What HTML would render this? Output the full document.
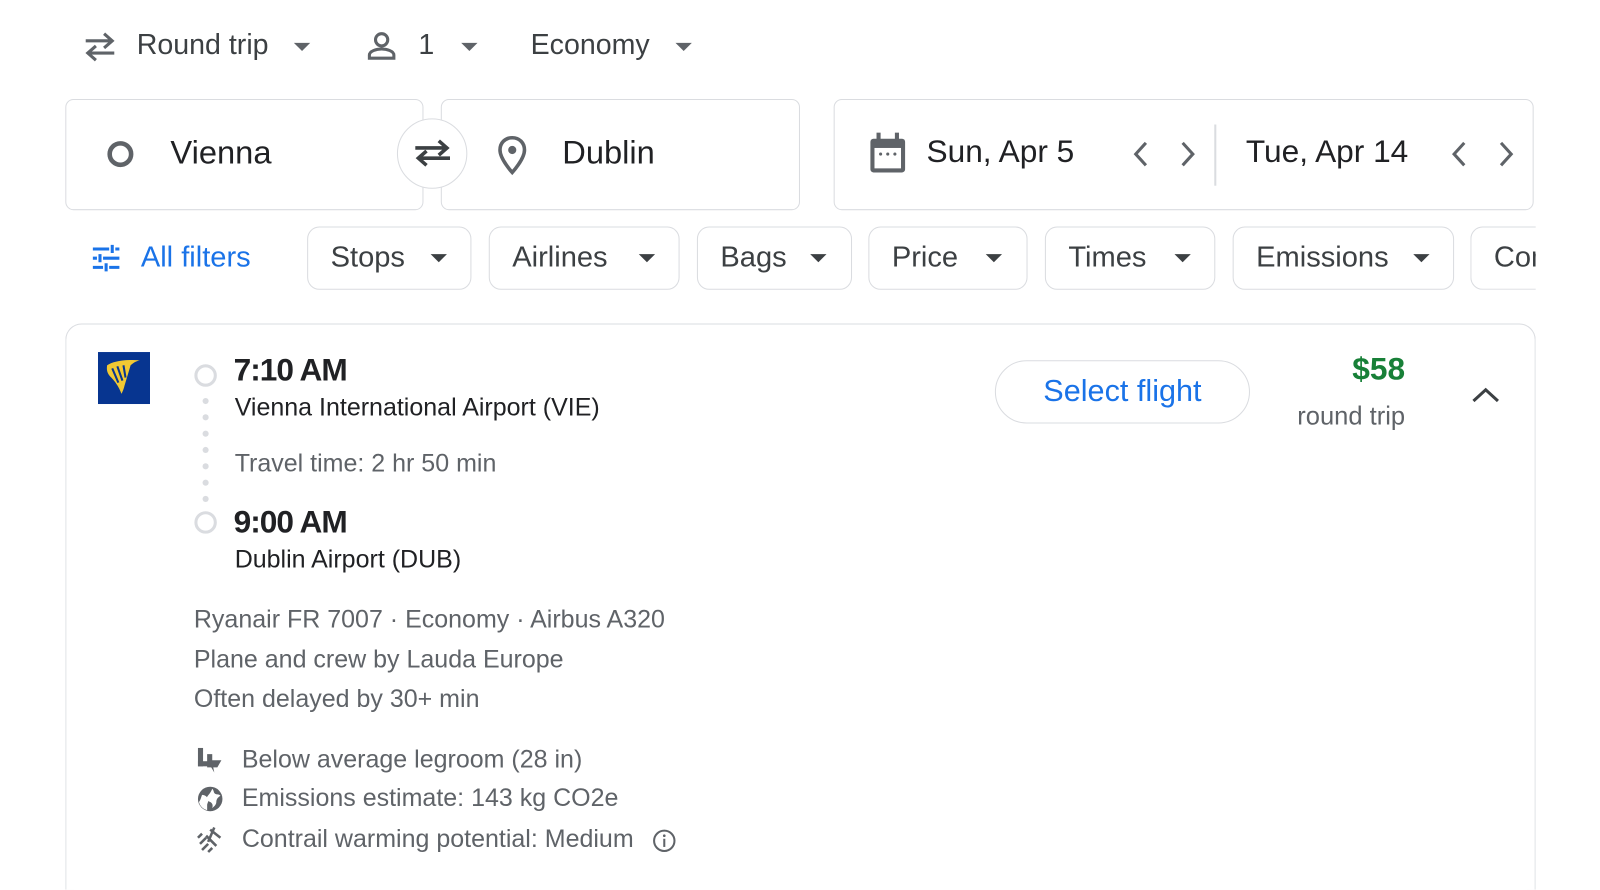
<!DOCTYPE html>
<html><head><meta charset="utf-8"><style>
*{box-sizing:border-box;margin:0;padding:0}
html,body{width:1600px;height:890px;overflow:hidden;background:#fff}
body{font-family:"Liberation Sans",Arial,sans-serif;color:#202124;position:relative}
#w{position:absolute;left:0;top:0;width:1568px;height:872px;overflow:hidden;transform:scale(1.0204);transform-origin:0 0}
.a{position:absolute;white-space:nowrap}
.box{position:absolute;border:1.5px solid #dadce0;border-radius:8px;background:#fff}
.chip{position:absolute;top:222px;height:62px;border:1.5px solid #dadce0;border-radius:12px;font-size:28.5px;color:#3c4043;padding-left:22px;line-height:59px;background:#fff}
.caret{display:inline-block;width:0;height:0;border-left:8px solid transparent;border-right:8px solid transparent;border-top:8px solid #3c4043;position:absolute;top:26px}
.tcaret{position:absolute;width:0;height:0;border-left:8px solid transparent;border-right:8px solid transparent;border-top:8px solid #5f6368}
.g{color:#5f6368}
.t{font-size:24.5px}
</style></head><body><div id="w">
<svg class="a" style="left:80px;top:30px" width="36" height="32" viewBox="0 0 36 32"><path d="M4 10h26M22 3l8 7-8 7" fill="none" stroke="#5f6368" stroke-width="3"/><path d="M32 22H6M14 15l-8 7 8 7" fill="none" stroke="#5f6368" stroke-width="3"/></svg>
<div class="a" style="left:134px;top:28px;font-size:28px;color:#3c4043">Round trip</div>
<div class="tcaret" style="left:288px;top:42px"></div>
<svg class="a" style="left:359px;top:30px" width="30" height="30" viewBox="0 0 30 30"><circle cx="15" cy="9" r="6" fill="none" stroke="#5f6368" stroke-width="3"/><path d="M3 27v-3c0-4 7-6 12-6s12 2 12 6v3z" fill="none" stroke="#5f6368" stroke-width="3"/></svg>
<div class="a" style="left:410px;top:28px;font-size:28px;color:#3c4043">1</div>
<div class="tcaret" style="left:452px;top:42px"></div>
<div class="a" style="left:520px;top:28px;font-size:28px;color:#3c4043">Economy</div>
<div class="tcaret" style="left:662px;top:42px"></div>

<div class="box" style="left:64px;top:97px;width:351px;height:109px"></div>
<div class="box" style="left:432px;top:97px;width:352px;height:109px"></div>
<svg class="a" style="left:104px;top:137px" width="28" height="28"><circle cx="14" cy="14" r="10.5" fill="none" stroke="#5f6368" stroke-width="4.5"/></svg>
<div class="a" style="left:167px;top:131px;font-size:32px">Vienna</div>
<div class="a" style="left:389px;top:116px;width:69px;height:69px;border-radius:50%;border:1.5px solid #dadce0;background:#fff"></div>
<svg class="a" style="left:404px;top:134px" width="40" height="32" viewBox="0 0 40 32"><path d="M3 11h30M26 4l8 7-8 7" fill="none" stroke="#3c4043" stroke-width="3.5"/><path d="M37 21H7M14 14l-8 7 8 7" fill="none" stroke="#3c4043" stroke-width="3.5"/></svg>
<svg class="a" style="left:486px;top:132px" width="32" height="40" viewBox="0 0 32 40"><path d="M16 3C9 3 4 8 4 15c0 9 12 22 12 22s12-13 12-22C28 8 23 3 16 3z" fill="none" stroke="#5f6368" stroke-width="3.5"/><circle cx="16" cy="15" r="4" fill="#5f6368"/></svg>
<div class="a" style="left:551px;top:131px;font-size:32px">Dublin</div>

<div class="box" style="left:817px;top:97px;width:686px;height:109px"></div>
<svg class="a" style="left:851px;top:129px" width="38" height="42" viewBox="0 0 38 42"><rect x="2" y="7" width="34" height="33" rx="3" fill="#5f6368"/><rect x="6" y="16" width="26" height="20" fill="#fff"/><rect x="8" y="1" width="4" height="8" fill="#5f6368"/><rect x="26" y="1" width="4" height="8" fill="#5f6368"/><circle cx="12" cy="22" r="1.5" fill="#5f6368"/><circle cx="19" cy="22" r="1.5" fill="#5f6368"/><circle cx="26" cy="22" r="1.5" fill="#5f6368"/></svg>
<div class="a" style="left:908px;top:131px;font-size:31px">Sun, Apr 5</div>
<svg class="a" style="left:1105px;top:137px" width="80" height="28" viewBox="0 0 80 28"><path d="M18 3L8 14l10 11M54 3l10 11-10 11" fill="none" stroke="#5f6368" stroke-width="3"/></svg>
<div class="a" style="left:1190px;top:122px;width:2px;height:60px;background:#dadce0"></div>
<div class="a" style="left:1221px;top:131px;font-size:31px">Tue, Apr 14</div>
<svg class="a" style="left:1417px;top:137px" width="80" height="28" viewBox="0 0 80 28"><path d="M18 3L8 14l10 11M54 3l10 11-10 11" fill="none" stroke="#5f6368" stroke-width="3"/></svg>

<svg class="a" style="left:89px;top:238px" width="30" height="30" viewBox="0 0 30 30" stroke="#1a73e8" stroke-width="3" fill="none"><path d="M2 6h16M24 6h4M21 2v8M2 15h4M12 15h16M9 11v8M2 24h10M18 24h10M15 20v8"/></svg>
<div class="a" style="left:138px;top:236px;font-size:28.5px;color:#1a73e8">All filters</div>
<div class="chip" style="left:301px;width:161px">Stops<span class="caret" style="left:120px"></span></div>
<div class="chip" style="left:479px;width:187px">Airlines<span class="caret" style="left:146px"></span></div>
<div class="chip" style="left:683px;width:152px">Bags<span class="caret" style="left:110px"></span></div>
<div class="chip" style="left:851px;width:156px">Price<span class="caret" style="left:114px"></span></div>
<div class="chip" style="left:1024px;width:167px">Times<span class="caret" style="left:126px"></span></div>
<div class="chip" style="left:1208px;width:217px">Emissions<span class="caret" style="left:176px"></span></div>
<div class="a" style="left:1441px;top:222px;width:64px;height:62px;overflow:hidden"><div class="chip" style="left:0;top:0;width:160px">Connecting</div></div>

<div class="a" style="left:64px;top:317px;width:1441px;height:555px;border:1.5px solid #dadce0;border-bottom:none;border-radius:16px 16px 0 0"></div>
<svg class="a" style="left:96px;top:345px" width="51" height="51" viewBox="0 0 51 51"><rect width="51" height="51" fill="#073590"/><path d="M9 13c6-4 18-6 32-5-4 1-7 3-9 5l-6 20c-1 4-2 6-3 8-2-6-6-12-10-16-3-3-5-6-4-12z" fill="#f1c933"/><path d="M14 16l6 14M19 14l5 14M25 13l2 12" stroke="#073590" stroke-width="2"/></svg>
<svg class="a" style="left:189px;top:355px" width="26" height="170" viewBox="0 0 26 170"><circle cx="12.5" cy="13" r="9.5" fill="none" stroke="#dadce0" stroke-width="3"/><circle cx="12.5" cy="157" r="9.5" fill="none" stroke="#dadce0" stroke-width="3"/><g fill="#dadce0"><circle cx="12.5" cy="38" r="3"/><circle cx="12.5" cy="54" r="3"/><circle cx="12.5" cy="70" r="3"/><circle cx="12.5" cy="86" r="3"/><circle cx="12.5" cy="102" r="3"/><circle cx="12.5" cy="118" r="3"/><circle cx="12.5" cy="134" r="3"/></g></svg>
<div class="a" style="left:229px;top:345px;font-size:31px;font-weight:bold;letter-spacing:-1px">7:10 AM</div>
<div class="a t" style="left:230px;top:386px">Vienna International Airport (VIE)</div>
<div class="a g t" style="left:230px;top:441px">Travel time: 2 hr 50 min</div>
<div class="a" style="left:229px;top:494px;font-size:31px;font-weight:bold;letter-spacing:-1px">9:00 AM</div>
<div class="a t" style="left:230px;top:535px">Dublin Airport (DUB)</div>

<div class="a g t" style="left:190px;top:594px">Ryanair FR 7007 · Economy · Airbus A320</div>
<div class="a g t" style="left:190px;top:633px">Plane and crew by Lauda Europe</div>
<div class="a g t" style="left:190px;top:672px">Often delayed by 30+ min</div>

<svg class="a" style="left:193px;top:732px" width="26" height="26" viewBox="0 0 26 26" fill="#5f6368"><rect x="1" y="1" width="5" height="18"/><rect x="1" y="14" width="14" height="5"/><path d="M10 7h5v6h9l-4 7h-4l1 5-3-5h-4z"/></svg>
<div class="a g t" style="left:237px;top:731px">Below average legroom (28 in)</div>
<svg class="a" style="left:193px;top:770px" width="26" height="26" viewBox="0 0 26 26"><circle cx="13" cy="13" r="12" fill="#5f6368"/><path d="M5 9c3 0 5 2 6 4s-1 4-1 6 0 4 0 5c-4-1-7-4-8-8 1-1 2-4 3-7zM15 3c2 2 1 4 3 5s4 0 5 2c-2 1-4 3-4 6s-3 5-4 6c1-3 0-5-2-6-3-1-4-3-3-5s3-3 5-8z" fill="#fff"/></svg>
<div class="a g t" style="left:237px;top:769px">Emissions estimate: 143 kg CO2e</div>
<svg class="a" style="left:192px;top:809px" width="28" height="28" viewBox="0 0 28 28" stroke="#5f6368" fill="none" stroke-width="2.5"><path d="M14 4l10 8M18 2l-6 14M10 10l10 10M2 12l4-4M4 18l6-6M6 24l6-6M12 26l4-4"/></svg>
<div class="a g t" style="left:237px;top:809px">Contrail warming potential: Medium</div>
<svg class="a" style="left:639px;top:812px" width="24" height="24" viewBox="0 0 24 24"><circle cx="12" cy="12" r="10" fill="none" stroke="#5f6368" stroke-width="2"/><rect x="11" y="10" width="2" height="8" fill="#5f6368"/><circle cx="12" cy="7" r="1.3" fill="#5f6368"/></svg>

<div class="a" style="left:975px;top:353px;width:250px;height:62px;border:1.5px solid #dadce0;border-radius:31px;text-align:center;line-height:59px;font-size:30px;color:#1a73e8">Select flight</div>
<div class="a" style="left:1277px;top:344px;width:100px;text-align:right;font-size:31px;font-weight:bold;color:#188038">$58</div>
<div class="a g" style="left:1237px;top:394px;width:140px;text-align:right;font-size:25px">round trip</div>
<svg class="a" style="left:1442px;top:378px" width="28" height="18" viewBox="0 0 28 18"><path d="M2 15L14 4l12 11" fill="none" stroke="#3c4043" stroke-width="3"/></svg>
</div></body></html>
